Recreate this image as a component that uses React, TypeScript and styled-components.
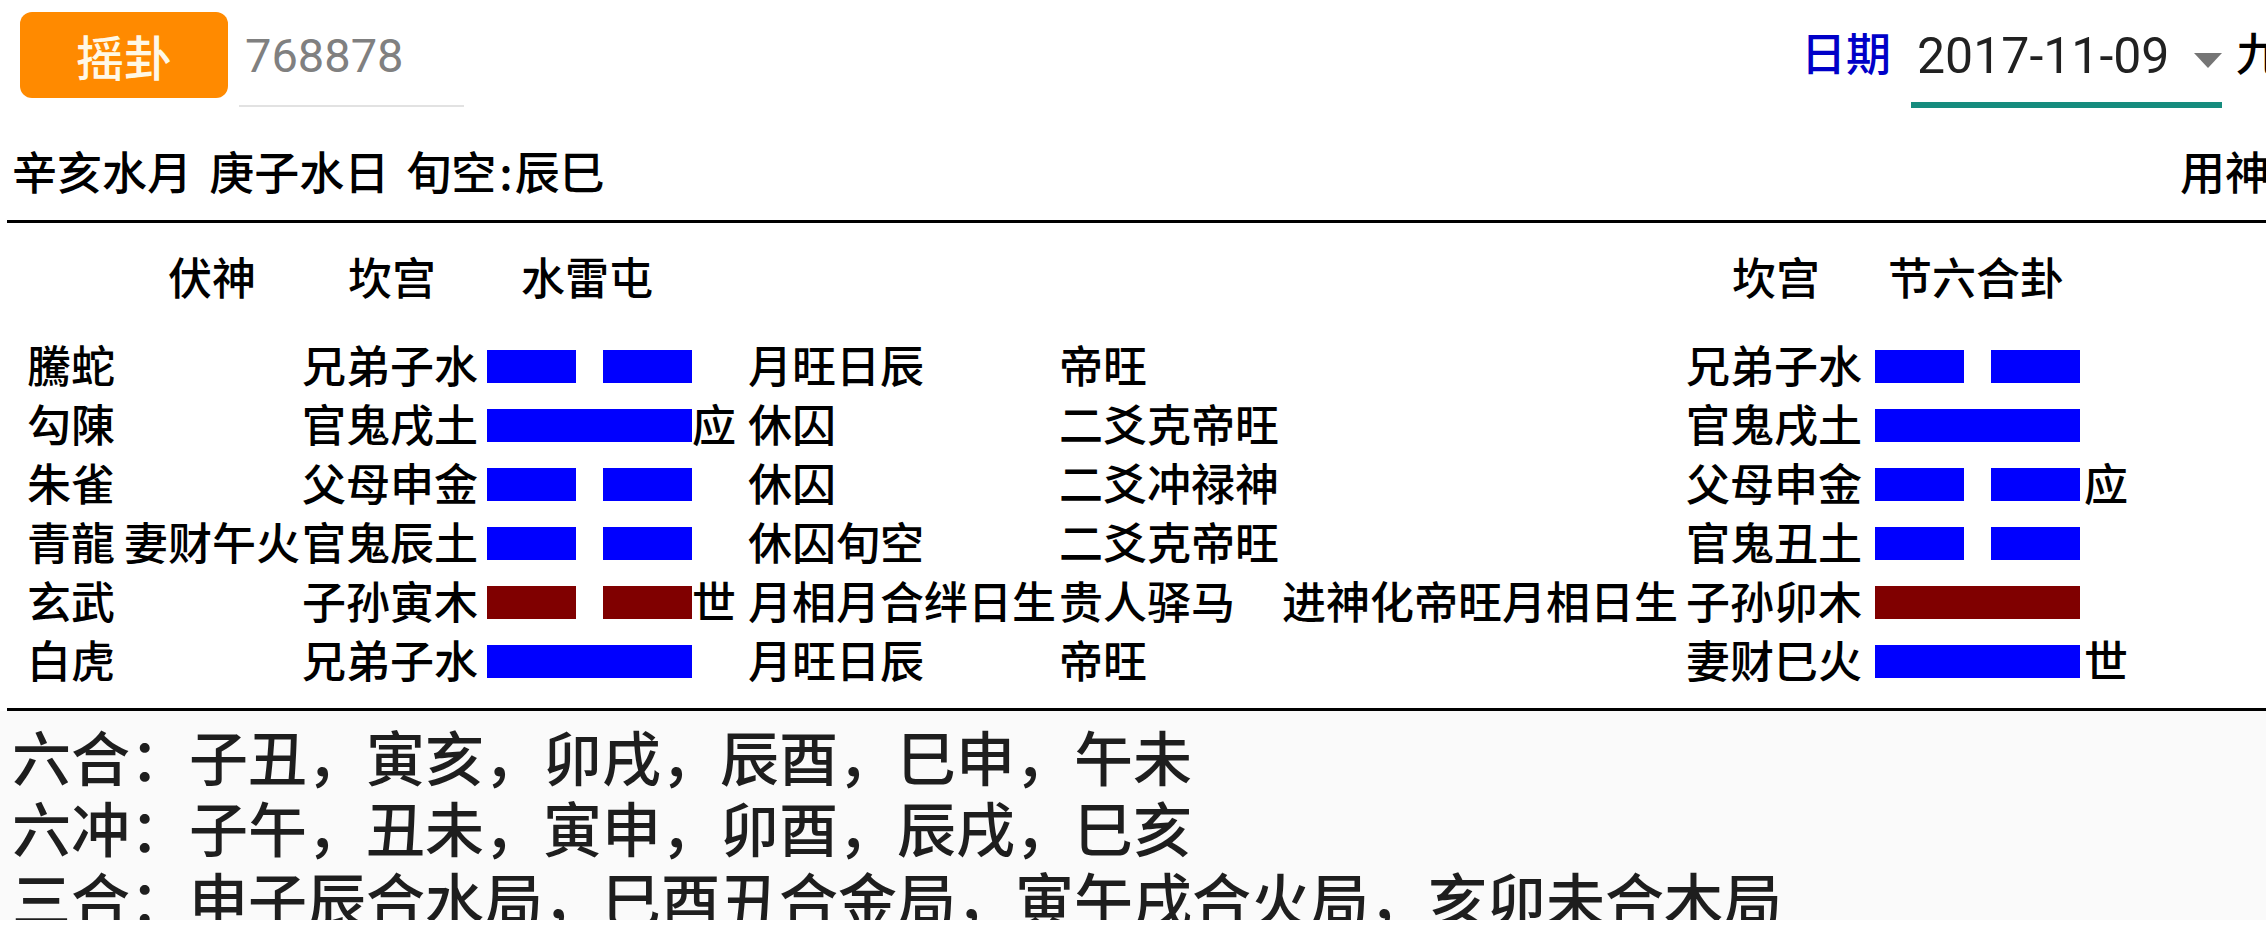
import React from "react";
import styled, { createGlobalStyle } from "styled-components";

const GlobalStyle = createGlobalStyle`
  html, body {
    margin: 0;
    padding: 0;
    background: #ffffff;
    overflow: hidden;
  }
  body {
    font-family: "Noto Sans CJK SC", "Noto Sans", sans-serif;
    font-weight: 500;
    color: #000000;
  }
`;

const Page = styled.div`
  width: 2266px;
  height: 933px;
  overflow: hidden;
  display: flex;
  flex-direction: column;
  background: #ffffff;
`;

const TopBar = styled.div`
  display: grid;
  grid-template-columns: 1801px 1fr;
  height: 141px;
`;

const TopLeft = styled.div`
  display: flex;
  align-items: flex-start;
  gap: 11px;
  padding: 12px 0 0 20px;
`;

const ShakeButton = styled.button`
  width: 208px;
  height: 86px;
  border: none;
  border-radius: 12px;
  background: #ff8a00;
  color: #fff8e6;
  font-family: "Noto Sans CJK SC", sans-serif;
  font-weight: 500;
  font-size: 48px;
  line-height: 86px;
  padding: 0;
`;

const NumberField = styled.div`
  width: 225px;
  height: 95px;
  border-bottom: 2px solid #e2e2e2;
  padding: 14px 0 0 6px;
  box-sizing: border-box;
  font-family: Roboto, "Liberation Sans", sans-serif;
  font-weight: 400;
  font-size: 47px;
  line-height: 60px;
  color: #808080;
`;

const DateGroup = styled.div`
  display: flex;
  align-items: flex-start;
  padding-top: 22px;
  white-space: nowrap;
  min-width: 0;
`;

const DateLabel = styled.span`
  font-size: 45px;
  line-height: 60px;
  color: #0000c8;
  flex-shrink: 0;
`;

const DateSelect = styled.div`
  display: flex;
  align-items: flex-start;
  width: 311px;
  height: 86px;
  box-sizing: border-box;
  margin-left: 20px;
  border-bottom: 6px solid #168c7e;
  flex-shrink: 0;
`;

const DateText = styled.span`
  font-family: Roboto, "Liberation Sans", sans-serif;
  font-weight: 400;
  font-size: 50px;
  line-height: 60px;
  padding: 4px 0 0 6px;
  color: #212121;
`;

const Caret = styled.span`
  margin: 31px 0 0 auto;
  width: 0;
  height: 0;
  border-left: 14.5px solid transparent;
  border-right: 14.5px solid transparent;
  border-top: 15px solid #757575;
`;

const TrailText = styled.span`
  font-size: 45px;
  line-height: 60px;
  margin-left: 14px;
  flex-shrink: 0;
`;

const InfoRow = styled.div`
  display: grid;
  grid-template-columns: 2180px 1fr;
  height: 59px;
  font-size: 45px;
  line-height: 59px;
  white-space: nowrap;
`;

const InfoText = styled.span`
  padding-left: 12px;
  word-spacing: 7px;
`;

const Colon = styled.span`
  padding: 0 2px 0 3px;
`;

const Divider = styled.div<{ $top: number }>`
  height: 3px;
  margin: ${(p) => p.$top}px 0 0 7px;
  background: #000000;
  flex-shrink: 0;
`;

const Table = styled.div`
  display: flex;
  flex-direction: column;
  margin-top: 24px;
`;

const Row = styled.div<{ $head?: boolean }>`
  display: grid;
  grid-template-columns: 95px 180px 180px 210px 56px 311px 223px 402px 184px 216px 1fr;
  padding-left: 27px;
  height: 59px;
  font-size: 44px;
  line-height: 59px;
  white-space: nowrap;
  margin-bottom: ${(p) => (p.$head ? "29px" : "0")};
`;

const Cell = styled.div<{ $center?: boolean; $shift?: number }>`
  text-align: ${(p) => (p.$center ? "center" : "left")};
  padding-left: ${(p) => p.$shift ?? 0}px;
`;

const BarCell = styled.div<{ $offset: number }>`
  display: flex;
  align-items: center;
  padding-left: ${(p) => p.$offset}px;
`;

const Bar = styled.div`
  display: flex;
  gap: 27px;
  width: 205px;
  height: 33px;
  margin-top: 4px;
`;

const BarPiece = styled.div<{ $color: string }>`
  flex: 1;
  background: ${(p) => p.$color};
`;

const Rules = styled.div`
  height: 209px;
  overflow: hidden;
  background: #fafafa;
  padding: 9px 0 0 12px;
  box-sizing: border-box;
  font-size: 59px;
  line-height: 71px;
  color: #1e1e1e;
  white-space: nowrap;
`;

const RuleLine = styled.div``;

const BLUE = "#0000ff";
const RED = "#800000";

type Yao = { yin: boolean; color: string };

type RowData = {
  god: string;
  fu: string;
  main: string;
  mainYao: Yao;
  mark: string;
  state: string;
  sha: string;
  change: string;
  bian: string;
  bianYao: Yao;
  bianMark: string;
};

const rows: RowData[] = [
  { god: "騰蛇", fu: "", main: "兄弟子水", mainYao: { yin: true, color: BLUE }, mark: "", state: "月旺日辰", sha: "帝旺", change: "", bian: "兄弟子水", bianYao: { yin: true, color: BLUE }, bianMark: "" },
  { god: "勾陳", fu: "", main: "官鬼戌土", mainYao: { yin: false, color: BLUE }, mark: "应", state: "休囚", sha: "二爻克帝旺", change: "", bian: "官鬼戌土", bianYao: { yin: false, color: BLUE }, bianMark: "" },
  { god: "朱雀", fu: "", main: "父母申金", mainYao: { yin: true, color: BLUE }, mark: "", state: "休囚", sha: "二爻冲禄神", change: "", bian: "父母申金", bianYao: { yin: true, color: BLUE }, bianMark: "应" },
  { god: "青龍", fu: "妻财午火", main: "官鬼辰土", mainYao: { yin: true, color: BLUE }, mark: "", state: "休囚旬空", sha: "二爻克帝旺", change: "", bian: "官鬼丑土", bianYao: { yin: true, color: BLUE }, bianMark: "" },
  { god: "玄武", fu: "", main: "子孙寅木", mainYao: { yin: true, color: RED }, mark: "世", state: "月相月合绊日生", sha: "贵人驿马", change: "进神化帝旺月相日生", bian: "子孙卯木", bianYao: { yin: false, color: RED }, bianMark: "" },
  { god: "白虎", fu: "", main: "兄弟子水", mainYao: { yin: false, color: BLUE }, mark: "", state: "月旺日辰", sha: "帝旺", change: "", bian: "妻财巳火", bianYao: { yin: false, color: BLUE }, bianMark: "世" },
];

const YaoBar: React.FC<{ yao: Yao }> = ({ yao }) => (
  <Bar>
    <BarPiece $color={yao.color} />
    {yao.yin && <BarPiece $color={yao.color} />}
  </Bar>
);

const rules = [
  "六合：子丑，寅亥，卯戌，辰酉，巳申，午未",
  "六冲：子午，丑未，寅申，卯酉，辰戌，巳亥",
  "三合：申子辰合水局，巳酉丑合金局，寅午戌合火局，亥卯未合木局",
];

export default function App() {
  return (
    <Page>
      <GlobalStyle />
      <TopBar>
        <TopLeft>
          <ShakeButton>摇卦</ShakeButton>
          <NumberField>768878</NumberField>
        </TopLeft>
        <DateGroup>
          <DateLabel>日期</DateLabel>
          <DateSelect>
            <DateText>2017-11-09</DateText>
            <Caret />
          </DateSelect>
          <TrailText>九宫</TrailText>
        </DateGroup>
      </TopBar>
      <InfoRow>
        <InfoText>
          辛亥水月 庚子水日 旬空<Colon>:</Colon>辰巳
        </InfoText>
        <span>用神</span>
      </InfoRow>
      <Divider $top={20} />
      <Table>
        <Row $head>
          <Cell />
          <Cell $center>伏神</Cell>
          <Cell $center>坎宫</Cell>
          <Cell $center>水雷屯</Cell>
          <Cell />
          <Cell />
          <Cell />
          <Cell />
          <Cell $center>坎宫</Cell>
          <Cell $center>节六合卦</Cell>
          <Cell />
        </Row>
        {rows.map((r, i) => (
          <Row key={i}>
            <Cell>{r.god}</Cell>
            <Cell $shift={2}>{r.fu}</Cell>
            <Cell>{r.main}</Cell>
            <BarCell $offset={5}>
              <YaoBar yao={r.mainYao} />
            </BarCell>
            <Cell>{r.mark}</Cell>
            <Cell>{r.state}</Cell>
            <Cell>{r.sha}</Cell>
            <Cell>{r.change}</Cell>
            <Cell $shift={2}>{r.bian}</Cell>
            <BarCell $offset={7}>
              <YaoBar yao={r.bianYao} />
            </BarCell>
            <Cell>{r.bianMark}</Cell>
          </Row>
        ))}
      </Table>
      <Divider $top={19} />
      <Rules>
        {rules.map((t) => (
          <RuleLine key={t}>{t}</RuleLine>
        ))}
      </Rules>
    </Page>
  );
}
